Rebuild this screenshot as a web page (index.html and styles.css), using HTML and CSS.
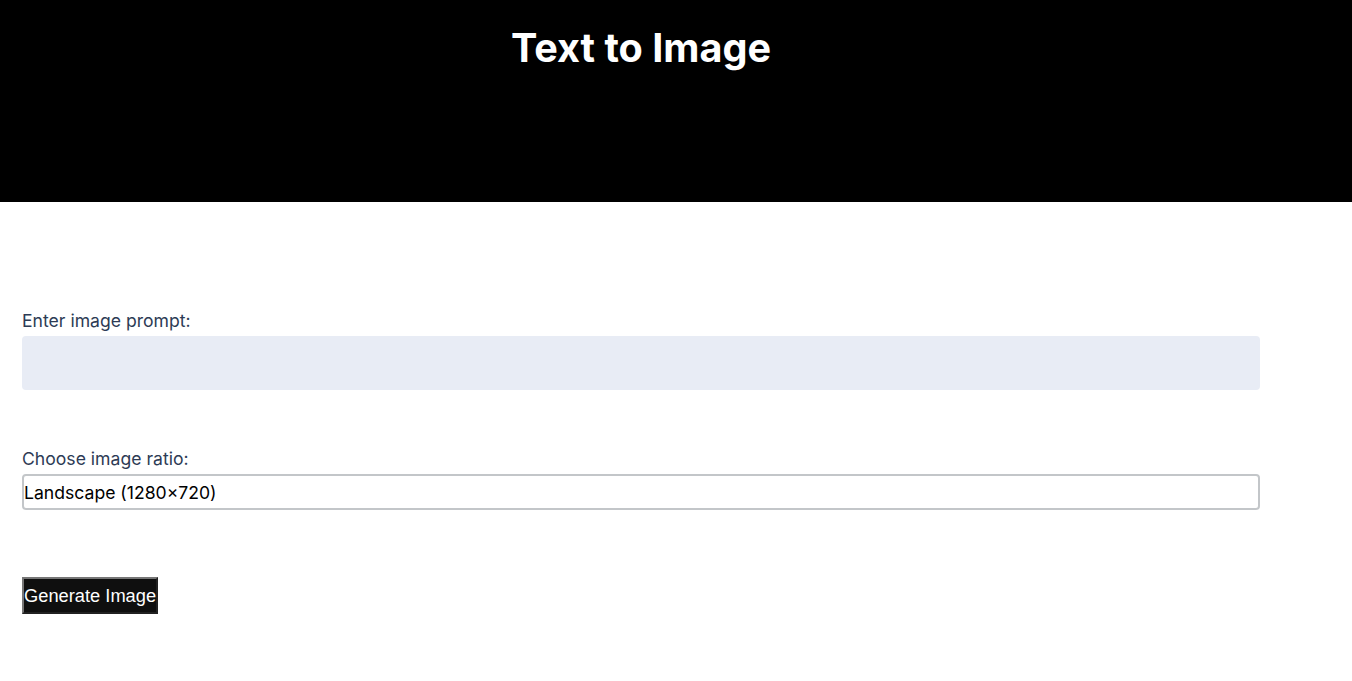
FILE: index.html
```html
<!DOCTYPE html>
<html lang="en">
<head>
<meta charset="utf-8">
<title>Text to Image</title>
<link rel="stylesheet" href="styles.css">
</head>
<body>
<header class="hero">
  <div class="hero-inner">
    <h1 class="title">Text to Image</h1>
  </div>
</header>
<main class="content">
  <form class="form">
    <div class="field field-prompt">
      <label class="label" for="prompt">Enter image prompt:</label>
      <input class="prompt" id="prompt" type="text">
    </div>
    <div class="field field-ratio">
      <label class="label" for="ratio">Choose image ratio:</label>
      <select class="ratio" id="ratio">
        <option>Landscape (1280×720)</option>
        <option>Portrait (720×1280)</option>
        <option>Square (1024×1024)</option>
      </select>
    </div>
    <button class="generate" type="button">Generate Image</button>
  </form>
</main>
</body>
</html>
```
FILE: styles.css
```css
html, body {
  margin: 0;
  padding: 0;
  background: #ffffff;
  font-family: Inter, "Noto Sans", sans-serif;
}
.hero {
  background: #000000;
  height: 202px;
  box-sizing: border-box;
  padding: 24px 0 0 22px;
}
.hero-inner {
  width: 1238px;
  text-align: center;
}
.title {
  margin: 0;
  color: #ffffff;
  font-size: 39.6px;
  font-weight: 700;
  line-height: 48px;
}
.content {
  padding: 108px 0 0 22px;
}
.form {
  width: 1238px;
  display: flex;
  flex-direction: column;
  align-items: flex-start;
}
.field {
  width: 100%;
  display: flex;
  flex-direction: column;
}
.field-ratio {
  margin-top: 58px;
}
.label {
  color: #2d3b55;
  font-size: 17.6px;
  line-height: 21px;
  margin-bottom: 5px;
}
.prompt {
  box-sizing: border-box;
  width: 100%;
  height: 54px;
  border: none;
  border-radius: 4px;
  background: #e8ecf5;
  font-family: Inter, sans-serif;
  font-size: 17.6px;
  padding: 0 10px;
  outline: none;
}
.ratio {
  box-sizing: border-box;
  width: 100%;
  height: 36px;
  border: 2px solid #c3c6c9;
  border-radius: 4px;
  background: #ffffff;
  color: #000000;
  font-family: Inter, sans-serif;
  font-size: 17.6px;
  padding: 0;
  appearance: none;
  -webkit-appearance: none;
}
.generate {
  margin-top: 67px;
  box-sizing: border-box;
  height: 37px;
  padding: 0;
  background: #0f0f0f;
  color: #ffffff;
  border: 2px outset #767676;
  font-family: "Liberation Sans", Arial, sans-serif;
  font-size: 18.3px;
  white-space: nowrap;
}
```
